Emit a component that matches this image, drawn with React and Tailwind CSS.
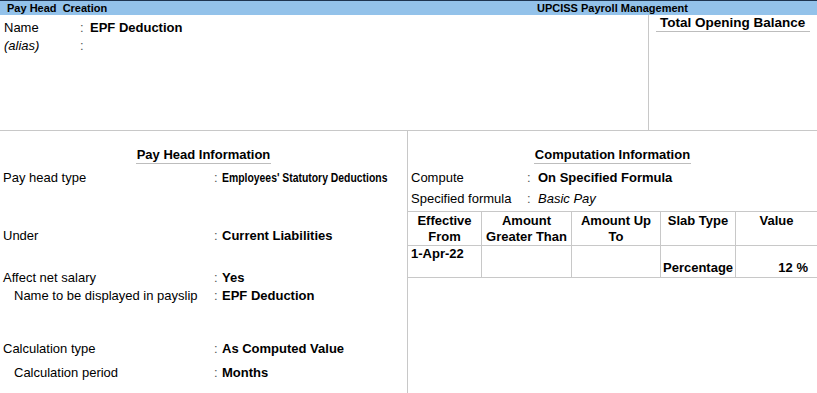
import React from 'react';

const Field = ({ label, value, indent, mt = '', narrow, labelW = 'w-[214px]' }) => (
  <div className={`flex h-[18px] items-center leading-[18px] ${mt}`}>
    <div className={`${labelW} ${indent ? 'pl-[14px]' : 'pl-[3px]'} shrink-0`}>{label}</div>
    <div className="w-[8px] shrink-0 text-[#555]">:</div>
    {narrow ? (
      <div className="w-[170px] font-bold whitespace-nowrap">
        <span className="inline-block origin-left scale-x-[0.8]">{value}</span>
      </div>
    ) : (
      <div className="font-bold whitespace-nowrap">{value}</div>
    )}
  </div>
);

const Cell = ({ w, children, className = '' }) => (
  <div className={`${w} shrink-0 border-r border-[#c8c8c8] ${className}`}>{children}</div>
);

export default function App() {
  return (
    <div className="w-[817px] h-[393px] overflow-hidden bg-white text-black text-[13px] font-['Liberation_Sans',Arial,sans-serif] flex flex-col">
      {/* title bar */}
      <div className="h-[15px] shrink-0 border-t border-[#1e3450] bg-[#93c2ea] flex items-center text-[11px] font-bold leading-[14px]">
        <div className="w-[537px] pl-[7px] whitespace-pre">Pay Head  Creation</div>
        <div>UPCISS Payroll Management</div>
      </div>

      {/* name section */}
      <div className="h-[116px] shrink-0 flex border-b border-[#c8c8c8]">
        <div className="flex-1 pt-[4px]">
          <div className="flex h-[18px] items-center">
            <div className="w-[80px] pl-[4px]">Name</div>
            <div className="w-[10px] text-[#555]">:</div>
            <div className="font-bold">EPF Deduction</div>
          </div>
          <div className="flex h-[18px] items-center">
            <div className="w-[80px] pl-[4px] italic">(alias)</div>
            <div className="w-[10px] text-[#555]">:</div>
          </div>
        </div>
        <div className="w-[169px] border-l border-[#c8c8c8] h-[115px]">
          <div className="ml-[7px] w-[154px] border-b border-[#bdbdbd] pl-[4px] text-[13.5px] font-bold leading-[16px] whitespace-nowrap">
            Total Opening Balance
          </div>
        </div>
      </div>

      {/* lower section */}
      <div className="flex-1 flex">
        <div className="w-[408px] shrink-0 border-r border-[#c8c8c8]">
          <div className="mt-[14px] text-center">
            <span className="inline-block border-b border-[#bdbdbd] font-bold leading-[16px] px-[1px]">
              Pay Head Information
            </span>
          </div>
          <Field mt="mt-[4px]" label="Pay head type" value="Employees' Statutory Deductions" narrow />
          <Field mt="mt-[40px]" label="Under" value="Current Liabilities" />
          <Field mt="mt-[24px]" label="Affect net salary" value="Yes" />
          <Field indent label="Name to be displayed in payslip" value="EPF Deduction" />
          <Field mt="mt-[35px]" label="Calculation type" value="As Computed Value" />
          <Field mt="mt-[6px]" indent label="Calculation period" value="Months" />
        </div>

        <div className="flex-1">
          <div className="mt-[14px] text-center">
            <span className="inline-block border-b border-[#bdbdbd] font-bold leading-[16px] px-[1px]">
              Computation Information
            </span>
          </div>
          <Field mt="mt-[4px]" labelW="w-[119px]" label="Compute" value={<span className="pl-[3px]">On Specified Formula</span>} />
          <div className="flex h-[18px] items-center mt-[3px]">
            <div className="w-[119px] pl-[3px]">Specified formula</div>
            <div className="w-[8px] text-[#555]">:</div>
            <div className="italic pl-[3px]">Basic Pay</div>
          </div>

          <div className="mt-[3px] border-t border-[#c8c8c8]">
            <div className="flex h-[34px] border-b border-[#c8c8c8] font-bold leading-[16px] text-center">
              <Cell w="w-[74px]" className="pt-[1px]">Effective<br />From</Cell>
              <Cell w="w-[90px]" className="pt-[1px]">Amount<br />Greater Than</Cell>
              <Cell w="w-[89px]" className="pt-[1px]">Amount Up<br />To</Cell>
              <Cell w="w-[75px]" className="pt-[1px]">Slab Type</Cell>
              <div className="flex-1 pt-[1px]">Value</div>
            </div>
            <div className="flex h-[32px] border-b border-[#c8c8c8] font-bold leading-[16px]">
              <Cell w="w-[74px]" className="pl-[3px]">1-Apr-22</Cell>
              <Cell w="w-[90px]" />
              <Cell w="w-[89px]" />
              <Cell w="w-[75px]" className="flex items-end pl-[2px] pb-[1px]">Percentage</Cell>
              <div className="flex-1 flex items-end justify-end pr-[9px] pb-[1px]">12 %</div>
            </div>
          </div>
        </div>
      </div>
    </div>
  );
}
